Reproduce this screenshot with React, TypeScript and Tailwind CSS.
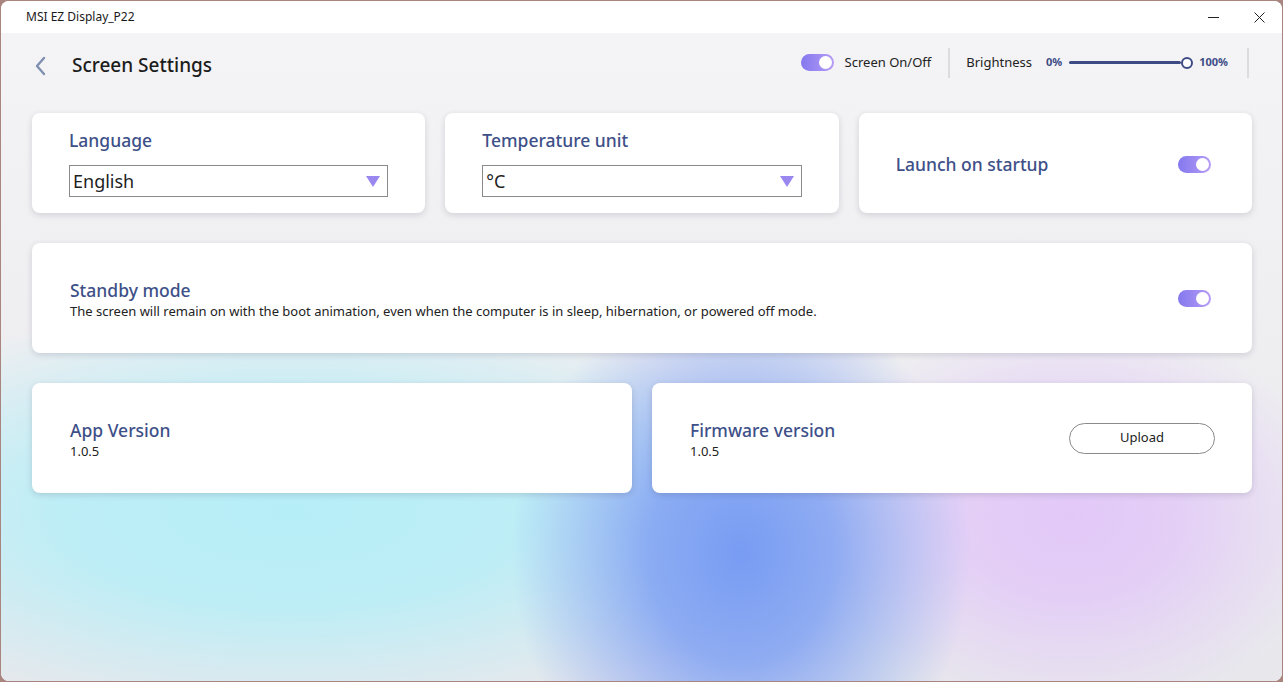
import React from 'react'

const font = { fontFamily: '"Noto Sans", "Open Sans", sans-serif' }

function Toggle() {
  return (
    <div className="w-[33px] h-[17px] rounded-full bg-gradient-to-r from-[#8478ee] to-[#b79cf6] flex items-center justify-end pr-[2px] shrink-0">
      <div className="w-[13px] h-[13px] rounded-full bg-white" />
    </div>
  )
}

function Select({ value }: { value: string }) {
  return (
    <div className="mt-[13px] h-[32px] border border-[#8a8a8a] bg-white flex items-center justify-between pl-[3px] pr-[7px]">
      <span className="text-[18px] text-[#1e1e1e]">{value}</span>
      <svg width="14" height="11" viewBox="0 0 14 11">
        <polygon points="0,0 14,0 7,11" fill="#9a88f0" />
      </svg>
    </div>
  )
}

function Card({ className, children }: { className?: string; children: React.ReactNode }) {
  return (
    <div className={`bg-white rounded-[8px] shadow-[0_2px_6px_rgba(60,60,90,0.18)] ${className ?? ''}`}>
      {children}
    </div>
  )
}

export default function App() {
  return (
    <div className="w-[1283px] h-[682px] bg-[#a8867f] p-[1px]" style={font}>
      <div className="h-full rounded-[8px] overflow-hidden flex flex-col bg-white">
        {/* Title bar */}
        <div className="h-[32px] bg-white flex items-center justify-between pl-[25px] shrink-0">
          <span className="text-[12px] text-[#1a1a1a]">MSI EZ Display_P22</span>
          <div className="flex items-center h-full">
            <div className="w-[46px] h-full flex items-center justify-center">
              <svg width="11" height="11" viewBox="0 0 11 11">
                <line x1="0" y1="5.5" x2="11" y2="5.5" stroke="#222" strokeWidth="1" />
              </svg>
            </div>
            <div className="w-[46px] h-full flex items-center justify-center">
              <svg width="11" height="11" viewBox="0 0 11 11">
                <path d="M0.5 0.5 L10.5 10.5 M10.5 0.5 L0.5 10.5" stroke="#222" strokeWidth="1" />
              </svg>
            </div>
          </div>
        </div>

        {/* Content */}
        <div className="flex-1 px-[31px] bg-[radial-gradient(ellipse_230px_270px_at_740px_520px,rgba(120,156,243,1)_0%,rgba(120,156,243,0.8)_40%,rgba(120,156,243,0)_100%),radial-gradient(ellipse_270px_200px_at_1070px_485px,rgba(226,200,248,1)_0%,rgba(226,200,248,0.8)_40%,rgba(226,200,248,0)_100%),radial-gradient(ellipse_520px_210px_at_290px_480px,rgba(182,238,247,1)_0%,rgba(182,238,247,0.85)_45%,rgba(182,238,247,0)_100%),linear-gradient(to_bottom,#f4f4f6,#e8e8ec)]">
          {/* Header */}
          <div className="h-[63px] flex items-center justify-between pt-[2px]">
            <div className="flex items-center">
              <svg width="14" height="20" viewBox="0 0 14 20" className="ml-[2px]">
                <polyline points="10,2 3,10 10,18" fill="none" stroke="#7f8fb0" strokeWidth="2.4" strokeLinecap="round" strokeLinejoin="round" />
              </svg>
              <span className="ml-[24px] text-[19px] font-medium text-[#1c1c1c]">Screen Settings</span>
            </div>
            <div className="flex items-center h-[30px] -mt-[6px] pr-[2px]">
              <Toggle />
              <span className="ml-[11px] text-[13px] text-[#222]">Screen On/Off</span>
              <div className="w-[2px] h-[30px] bg-[#dcdce0] ml-[17px]" />
              <span className="ml-[16px] text-[13px] text-[#222]">Brightness</span>
              <span className="ml-[14px] text-[11px] font-bold text-[#3d4b85]">0%</span>
              <div className="ml-[7px] flex items-center">
                <div className="w-[112px] h-[3px] bg-[#3d4b85] rounded-full" />
                <div className="w-[12px] h-[12px] rounded-full border-[2px] border-[#3d4b85] bg-white" />
              </div>
              <span className="ml-[6px] text-[11px] font-bold text-[#3d4b85]">100%</span>
              <div className="w-[2px] h-[30px] bg-[#dcdce0] ml-[19px]" />
            </div>
          </div>

          {/* Row 1 */}
          <div className="mt-[17px] grid grid-cols-3 gap-[20px] w-[1220px]">
            <Card className="h-[100px] px-[37px] pt-[15px]">
              <div className="text-[17.5px] font-medium leading-[24px] text-[#3e5088]">Language</div>
              <Select value="English" />
            </Card>
            <Card className="h-[100px] px-[37px] pt-[15px]">
              <div className="text-[17.5px] font-medium leading-[24px] text-[#3e5088]">Temperature unit</div>
              <Select value="°C" />
            </Card>
            <Card className="h-[100px] pl-[37px] pr-[41px] flex items-center justify-between">
              <span className="text-[17.5px] font-medium text-[#3e5088] mt-[3px]">Launch on startup</span>
              <div className="mt-[2px]">
                <Toggle />
              </div>
            </Card>
          </div>

          {/* Row 2 */}
          <Card className="mt-[30px] w-[1220px] h-[110px] pl-[38px] pr-[41px] flex items-center justify-between">
            <div className="mt-[1px]">
              <div className="text-[17.5px] font-medium leading-[24px] text-[#3e5088]">Standby mode</div>
              <div className="text-[13px] leading-[18px] text-[#222]">
                The screen will remain on with the boot animation, even when the computer is in sleep, hibernation, or powered off mode.
              </div>
            </div>
            <Toggle />
          </Card>

          {/* Row 3 */}
          <div className="mt-[30px] grid grid-cols-2 gap-[20px] w-[1220px]">
            <Card className="h-[110px] pl-[38px] flex flex-col justify-center">
              <div className="mt-[2px]">
                <div className="text-[17.5px] font-medium leading-[24px] text-[#3e5088]">App Version</div>
                <div className="text-[13px] leading-[18px] text-[#222]">1.0.5</div>
              </div>
            </Card>
            <Card className="h-[110px] pl-[38px] pr-[37px] flex items-center justify-between">
              <div className="mt-[2px]">
                <div className="text-[17.5px] font-medium leading-[24px] text-[#3e5088]">Firmware version</div>
                <div className="text-[13px] leading-[18px] text-[#222]">1.0.5</div>
              </div>
              <button className="w-[146px] h-[31px] rounded-full border border-[#8a8a8a] bg-white text-[13px] text-[#222]">
                Upload
              </button>
            </Card>
          </div>
        </div>
      </div>
    </div>
  )
}
